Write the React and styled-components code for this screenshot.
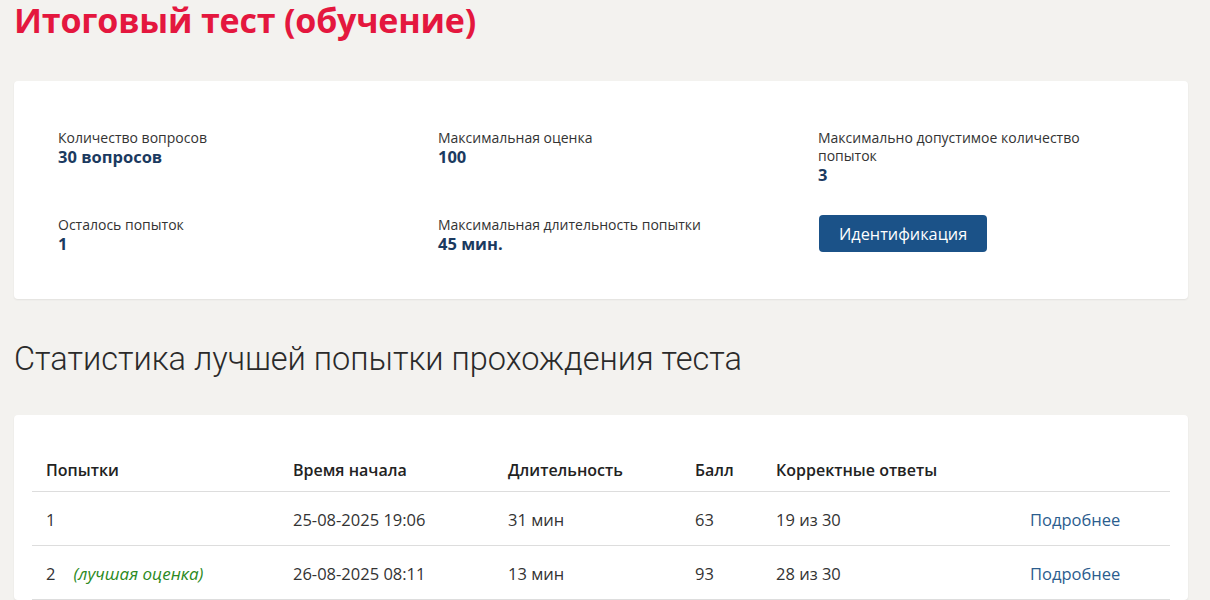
import React from 'react';
import styled, { createGlobalStyle } from 'styled-components';

const GlobalStyle = createGlobalStyle`
    html, body {
        margin: 0;
        padding: 0;
        background: #f3f2ef;
    }
    body {
        font-family: "Open Sans", "Noto Sans", Arial, sans-serif;
        color: #333;
    }
    * {
        box-sizing: border-box;
    }
`

const info = [
    { label: 'Количество вопросов', value: '30 вопросов' },
    { label: 'Максимальная оценка', value: '100' },
    { label: 'Максимально допустимое количество попыток', value: '3' },
    { label: 'Осталось попыток', value: '1' },
    { label: 'Максимальная длительность попытки', value: '45 мин.' },
]

const attempts = [
    { n: '1', best: false, start: '25-08-2025 19:06', dur: '31 мин', score: '63', correct: '19 из 30' },
    { n: '2', best: true, start: '26-08-2025 08:11', dur: '13 мин', score: '93', correct: '28 из 30' },
]

const App = () => {
    return (
        <>
            <GlobalStyle />
            <Page>
                <Title>Итоговый тест (обучение)</Title>
                <InfoCard>
                    <InfoGrid>
                        {info.map((item) => (
                            <InfoItem key={item.label}>
                                <Label>{item.label}</Label>
                                <Value>{item.value}</Value>
                            </InfoItem>
                        ))}
                        <InfoItem>
                            <IdButton type="button">Идентификация</IdButton>
                        </InfoItem>
                    </InfoGrid>
                </InfoCard>

                <SubTitle>Статистика лучшей попытки прохождения теста</SubTitle>

                <TableCard>
                    <Table>
                        <colgroup>
                            <col style={{ width: 247 }} />
                            <col style={{ width: 215 }} />
                            <col style={{ width: 187 }} />
                            <col style={{ width: 81 }} />
                            <col style={{ width: 254 }} />
                            <col />
                        </colgroup>
                        <thead>
                            <tr>
                                <Th>Попытки</Th>
                                <Th>Время начала</Th>
                                <Th>Длительность</Th>
                                <Th>Балл</Th>
                                <Th>Корректные ответы</Th>
                                <Th></Th>
                            </tr>
                        </thead>
                        <tbody>
                            {attempts.map((a) => (
                                <tr key={a.n}>
                                    <Td>
                                        {a.n}
                                        {a.best && <Best>(лучшая оценка)</Best>}
                                    </Td>
                                    <Td>{a.start}</Td>
                                    <Td>{a.dur}</Td>
                                    <Td>{a.score}</Td>
                                    <Td>{a.correct}</Td>
                                    <Td><MoreLink href="#">Подробнее</MoreLink></Td>
                                </tr>
                            ))}
                        </tbody>
                    </Table>
                </TableCard>
            </Page>
        </>
    );
};

export default App;

const Page = styled.div`
    padding: 0 22px 40px 14px;
`

const Title = styled.h1`
    margin: 0;
    font-family: "Open Sans", "Noto Sans", sans-serif;
    font-size: 34px;
    line-height: 41px;
    font-weight: 700;
    color: #e4173e;
    letter-spacing: -0.2px;
`

const Card = styled.div`
    background: #fff;
    border-radius: 4px;
    box-shadow: 0 1px 2px rgba(0, 0, 0, 0.07);
`

const InfoCard = styled(Card)`
    margin-top: 40px;
    padding: 48px 44px 45px 44px;
`

const InfoGrid = styled.div`
    display: grid;
    grid-template-columns: 380px 380px 1fr;
    row-gap: 31px;
`

const InfoItem = styled.div`
    max-width: 290px;
`

const Label = styled.div`
    font-size: 14px;
    line-height: 18px;
    color: #333;
`

const Value = styled.div`
    font-size: 16.5px;
    line-height: 20px;
    font-weight: 700;
    color: #1b3a60;
`

const IdButton = styled.button`
    margin: -1px 0 0 1px;
    height: 37px;
    padding: 0 20px;
    border: none;
    border-radius: 4px;
    background: #1b5288;
    color: #fff;
    font-family: "Open Sans", "Noto Sans", sans-serif;
    font-size: 16.3px;
    cursor: pointer;
`

const SubTitle = styled.h2`
    margin: 41px 0 37px 0;
    font-family: Roboto, "Noto Sans", sans-serif;
    font-weight: 300;
    font-size: 32.5px;
    line-height: 38px;
    color: #2a2a2a;
`

const TableCard = styled(Card)`
    padding: 34px 18px 0 18px;
`

const Table = styled.table`
    width: 100%;
    border-collapse: collapse;
    table-layout: fixed;
    font-size: 16.5px;
`

const Th = styled.th`
    text-align: left;
    font-weight: 600;
    font-size: 16px;
    color: #222;
    height: 42px;
    padding: 0 14px;
    border-bottom: 1px solid #ddd;
`

const Td = styled.td`
    height: 54px;
    padding: 3px 14px 0 14px;
    border-bottom: 1px solid #ddd;
    color: #333;
    white-space: nowrap;
`

const Best = styled.span`
    margin-left: 18px;
    font-style: italic;
    font-size: 17px;
    color: #2c8a22;
`

const MoreLink = styled.a`
    color: #2b5d8e;
    text-decoration: none;
`
